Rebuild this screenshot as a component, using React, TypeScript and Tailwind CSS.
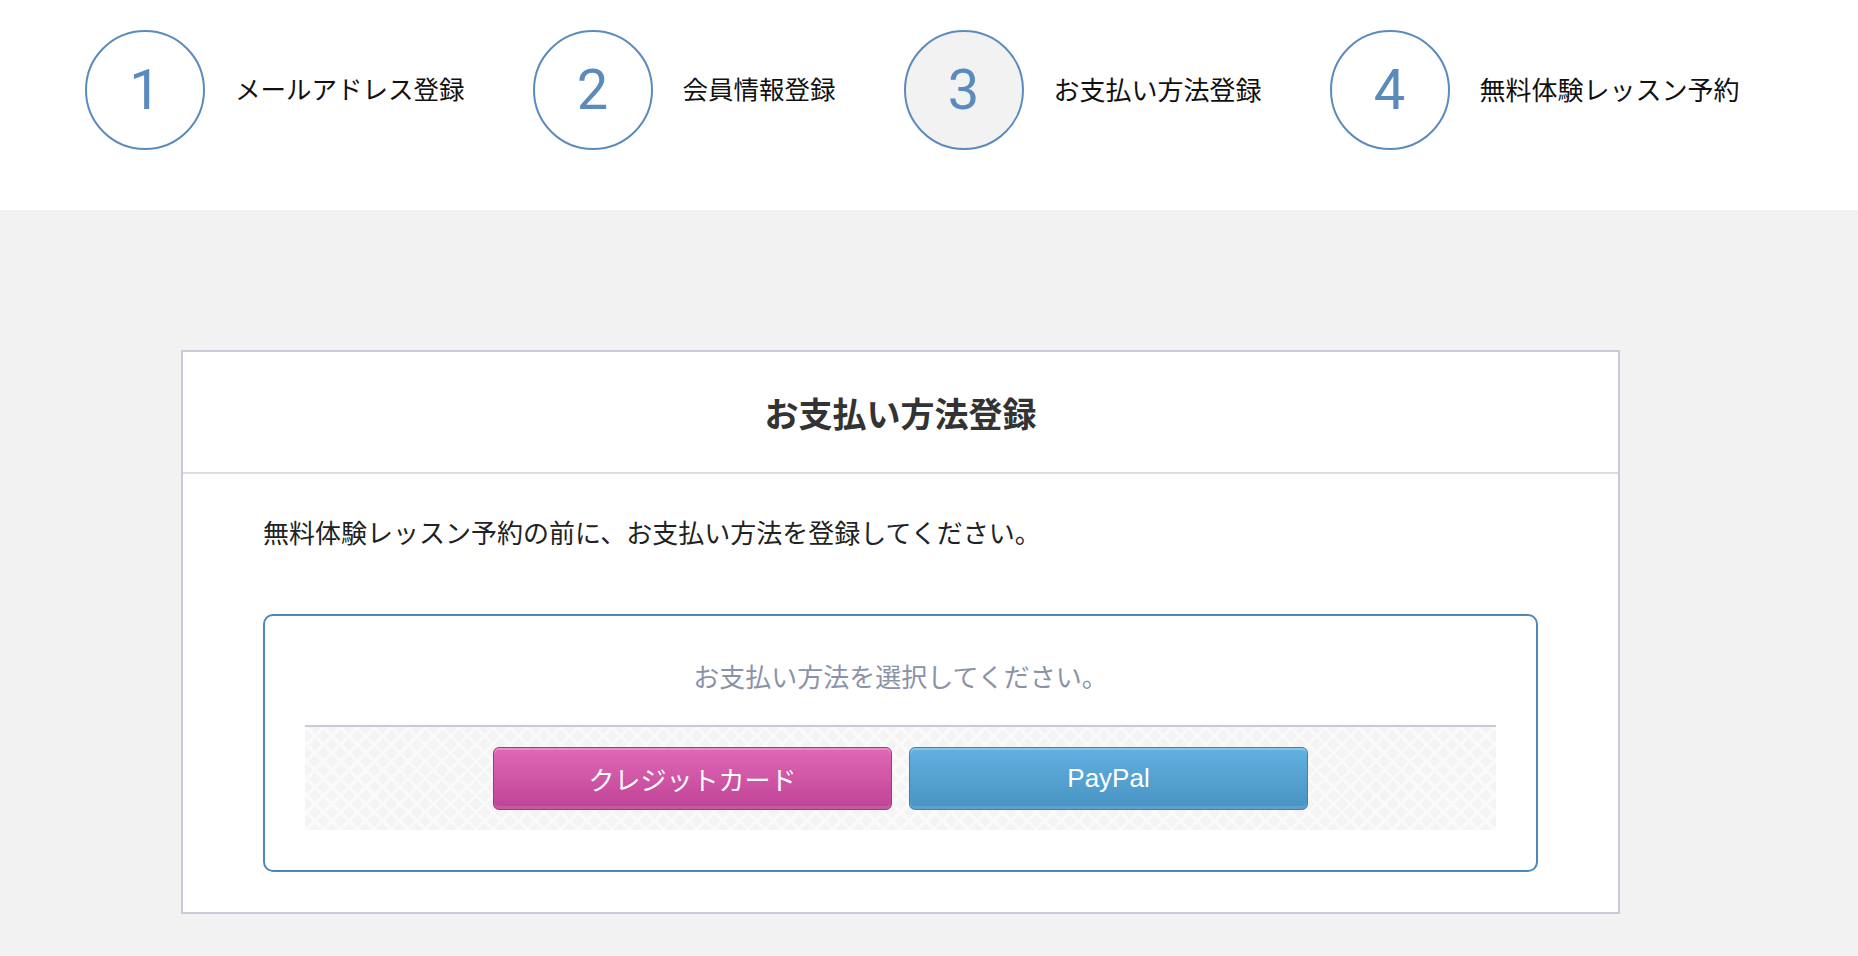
import React from "react";

const steps = [
  { num: "1", label: "メールアドレス登録", active: false, size: "text-[25.5px]" },
  { num: "2", label: "会員情報登録", active: false, size: "text-[25.5px]" },
  { num: "3", label: "お支払い方法登録", active: true, size: "text-[26px]" },
  { num: "4", label: "無料体験レッスン予約", active: false, size: "text-[26px]" },
];

function Step({ num, label, active, size }: { num: string; label: string; active: boolean; size: string }) {
  return (
    <div className="flex items-center">
      <div
        className={
          active
            ? "w-[120px] h-[120px] rounded-full border-2 border-[#5b8bbd] bg-[#f2f2f2] flex items-center justify-center"
            : "w-[120px] h-[120px] rounded-full border-2 border-[#5b8bbd] bg-white flex items-center justify-center"
        }
      >
        <span className="font-['Roboto',sans-serif] text-[56px] leading-none text-[#5b8bbd]">{num}</span>
      </div>
      <span className={`ml-[30px] mb-[4px] text-[#111] ${size}`}>{label}</span>
    </div>
  );
}

export default function App() {
  return (
    <div className="min-h-screen w-full bg-[#f2f2f2] font-['Noto_Sans_CJK_JP','Noto_Sans',sans-serif]">
      {/* Steps */}
      <header className="bg-white pt-[30px] pb-[60px] pl-[85px] flex items-center gap-[68px]">
        {steps.map((s) => (
          <Step key={s.num} {...s} />
        ))}
      </header>

      {/* Main */}
      <main className="pt-[140px] pb-[42px]">
        <section className="ml-[181px] w-[1439px] bg-white border-2 border-[#c8cad6]">
          <div className="h-[122px] flex items-center justify-center border-b-2 border-[#dddde0]">
            <h1 className="text-[34px] font-bold text-[#333]">お支払い方法登録</h1>
          </div>

          <div className="px-[80px] pt-[38px] pb-[40px]">
            <p className="text-[26px] leading-[40px] text-[#222]">
              無料体験レッスン予約の前に、お支払い方法を登録してください。
            </p>

            <div className="mt-[62px] border-2 border-[#4e87ba] rounded-[10px] px-[40px] pt-[40px] pb-[40px]">
              <p className="text-center text-[26px] leading-[40px] text-[#8a93a6]">
                お支払い方法を選択してください。
              </p>
              <div className="mt-[29px] border-t-2 border-[#c8cad6] bg-[#f4f4f4] bg-[image:repeating-linear-gradient(45deg,#fafafa_0,#fafafa_3px,transparent_3px,transparent_12px),repeating-linear-gradient(-45deg,#fafafa_0,#fafafa_3px,transparent_3px,transparent_12px)] py-[20px] flex justify-center gap-[17px]">
                <button className="w-[399px] h-[63px] rounded-[6px] border border-[#a6377f] bg-linear-to-b from-[#e068b5] to-[#bf4296] shadow-[inset_0_2px_0_rgba(255,255,255,0.25),inset_0_-3px_0_rgba(255,255,255,0.12)] text-white text-[26px]">
                  クレジットカード
                </button>
                <button className="w-[399px] h-[63px] rounded-[6px] border border-[#3d84b5] bg-linear-to-b from-[#62b1e0] to-[#4893c3] shadow-[inset_0_2px_0_rgba(255,255,255,0.25),inset_0_-3px_0_rgba(255,255,255,0.12)] text-white text-[26px] font-['Liberation_Sans',sans-serif]">
                  PayPal
                </button>
              </div>
            </div>
          </div>
        </section>
      </main>
    </div>
  );
}
